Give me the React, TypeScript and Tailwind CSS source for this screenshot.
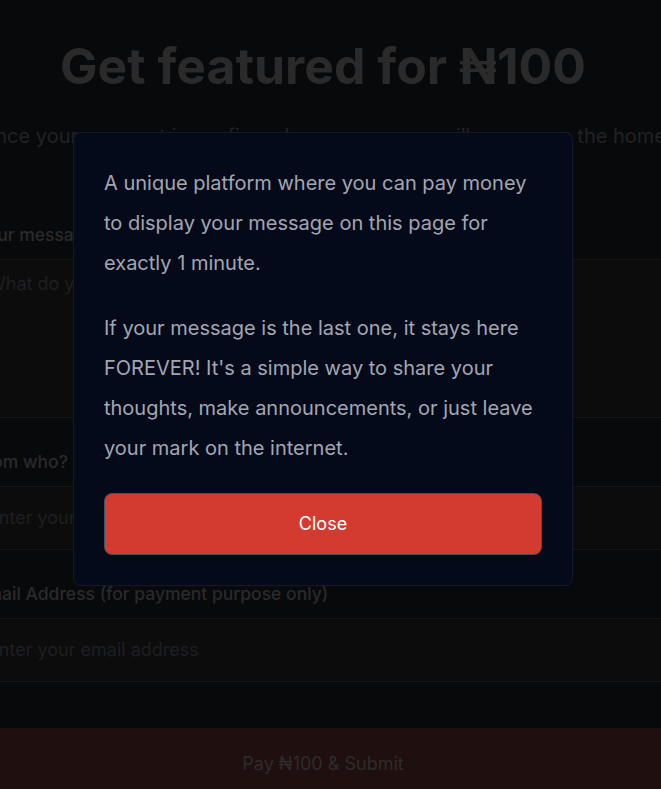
export default function App() {
  return (
    <div className="relative min-h-screen overflow-hidden bg-[#08090b] font-['Inter','Noto_Sans',sans-serif]">
      {/* page behind the dialog, already dimmed */}
      <div className="flex w-[646px] flex-col items-center">
        <h1 className="mt-[41px] text-center text-[50px] leading-[50px] font-bold text-[#2a2a2b]">
          Get featured for ₦100
        </h1>
        <div className="flex w-[646px] justify-center">
          <p className="mt-[31px] w-[720px] shrink-0 text-center text-xl leading-7 whitespace-nowrap text-[#222224]">
            Once your payment is confirmed, your message will appear on the home
            <br />
            page for exactly 1 minute.
          </p>
        </div>

        <div className="mt-[43px] flex w-[646px] justify-center">
          <form className="flex w-[694px] shrink-0 flex-col">
            <label className="mb-[10px] text-[17.5px] leading-7 font-medium text-[#2a2a2b]">Your message</label>
            <div className="h-[159px] border-y border-[#141416] bg-[#0c0c0d] px-3 pt-[10px] text-lg leading-7 text-[#1f1f21]">
              What do you want to say?
            </div>

            <label className="mt-[30px] mb-[10px] text-[17.5px] leading-7 font-medium text-[#2a2a2b]">From who?</label>
            <div className="h-[64px] border-y border-[#141416] bg-[#0c0c0d] px-3 py-[17px] text-lg leading-7 text-[#1f1f21]">
              Enter your name
            </div>

            <label className="mt-[30px] mb-[10px] text-[17.5px] leading-7 font-medium text-[#2a2a2b]">
              Email Address (for payment purpose only)
            </label>
            <div className="h-[64px] border-y border-[#141416] bg-[#0c0c0d] px-3 py-[17px] text-lg leading-7 text-[#1f1f21]">
              Enter your email address
            </div>

            <div className="mt-[46px] flex h-[72px] items-center justify-center bg-[#200f0f] text-lg text-[#2e2b2b]">
              Pay ₦100 &amp; Submit
            </div>
          </form>
        </div>
      </div>

      {/* dialog */}
      <div className="fixed inset-0 flex justify-center pt-[132px] pr-[15px]">
        <div className="h-fit w-[500px] rounded-lg border border-[#141a2b] bg-[#050a1b] p-[30px]">
          <p className="mb-[25px] text-xl leading-10 text-[#a3a6b0]">
            A unique platform where you can pay money to display your message on this page for exactly 1 minute.
          </p>
          <p className="mb-[25px] text-xl leading-10 text-[#a3a6b0]">
            If your message is the last one, it stays here FOREVER! It's a simple way to share your thoughts, make
            announcements, or just leave your mark on the internet.
          </p>
          <button className="h-[62px] w-full rounded-lg border border-[#4a4f5c] bg-[#d33b30] text-lg text-white">
            Close
          </button>
        </div>
      </div>
    </div>
  )
}
